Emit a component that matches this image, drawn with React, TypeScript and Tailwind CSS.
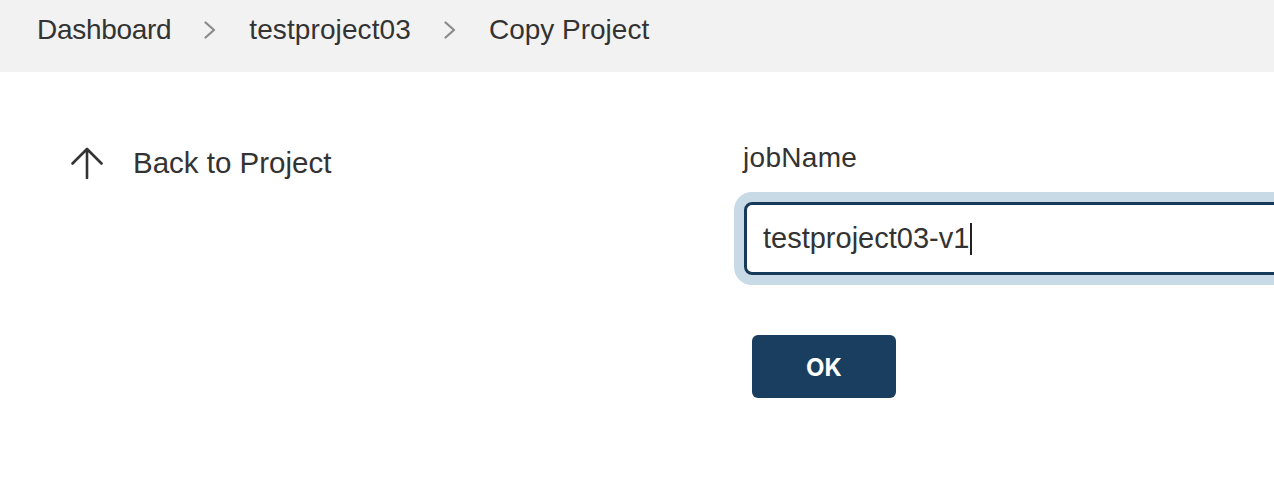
import { Fragment } from 'react'

const crumbs = ['Dashboard', 'testproject03', 'Copy Project']
const crumbTracking = ['tracking-[-0.3px]', 'tracking-[0.1px]', '']

function Chevron() {
  return (
    <svg width="12" height="18" viewBox="0 0 12 18" fill="none" className="shrink-0">
      <path d="M1.5 1.5 L10 9 L1.5 16.5" stroke="#8a8a8a" strokeWidth="2.2" strokeLinecap="round" strokeLinejoin="round" />
    </svg>
  )
}

function ArrowUp() {
  return (
    <svg width="32" height="32" viewBox="0 0 32 32" fill="none" className="shrink-0">
      <path d="M1.5 16.5 L16 2 L30.5 16.5 M16 2 V31" stroke="#333333" strokeWidth="2.6" strokeLinecap="round" strokeLinejoin="round" />
    </svg>
  )
}

export default function App() {
  return (
    <div className="w-[1274px] h-[484px] overflow-hidden bg-white text-[#333333]" style={{ fontFamily: '"Liberation Sans", Arial, sans-serif' }}>
      <div className="h-[72px] bg-[#f2f2f2] pl-[37px] pt-[13px]">
        <div className="flex items-center gap-[33px] text-[28px] leading-[34px]">
          {crumbs.map((c, i) => (
            <Fragment key={c}>
              {i > 0 && <Chevron />}
              <span className={crumbTracking[i]}>{c}</span>
            </Fragment>
          ))}
        </div>
      </div>

      <div className="flex pt-[67px]">
        <div className="w-[744px] shrink-0 pl-[71px] pt-[6px]">
          <a className="flex items-center gap-[30px] text-[29.5px] leading-[36px] cursor-pointer">
            <ArrowUp />
            <span>Back to Project</span>
          </a>
        </div>

        <div className="flex-1 min-w-0">
          <label className="block -ml-px pt-[2px] text-[28px] leading-[34px] tracking-[0.3px]">jobName</label>
          <div className="mt-[27px] w-[700px] h-[73px] rounded-[8px] border-[3px] border-[#17395a] shadow-[0_0_0_10px_#c9dae7] pl-4 flex items-center text-[29px]">
            <span>testproject03-v1</span>
            <span className="ml-[1px] w-[2px] h-[32px] bg-[#222222]" />
          </div>
          <button className="mt-[60px] ml-2 w-[144px] h-[63px] pt-[2px] rounded-[6px] bg-[#1a3e5f] text-white font-bold text-[24px] leading-none" style={{ fontFamily: 'Inter, "Liberation Sans", sans-serif' }}>
            OK
          </button>
        </div>
      </div>
    </div>
  )
}
